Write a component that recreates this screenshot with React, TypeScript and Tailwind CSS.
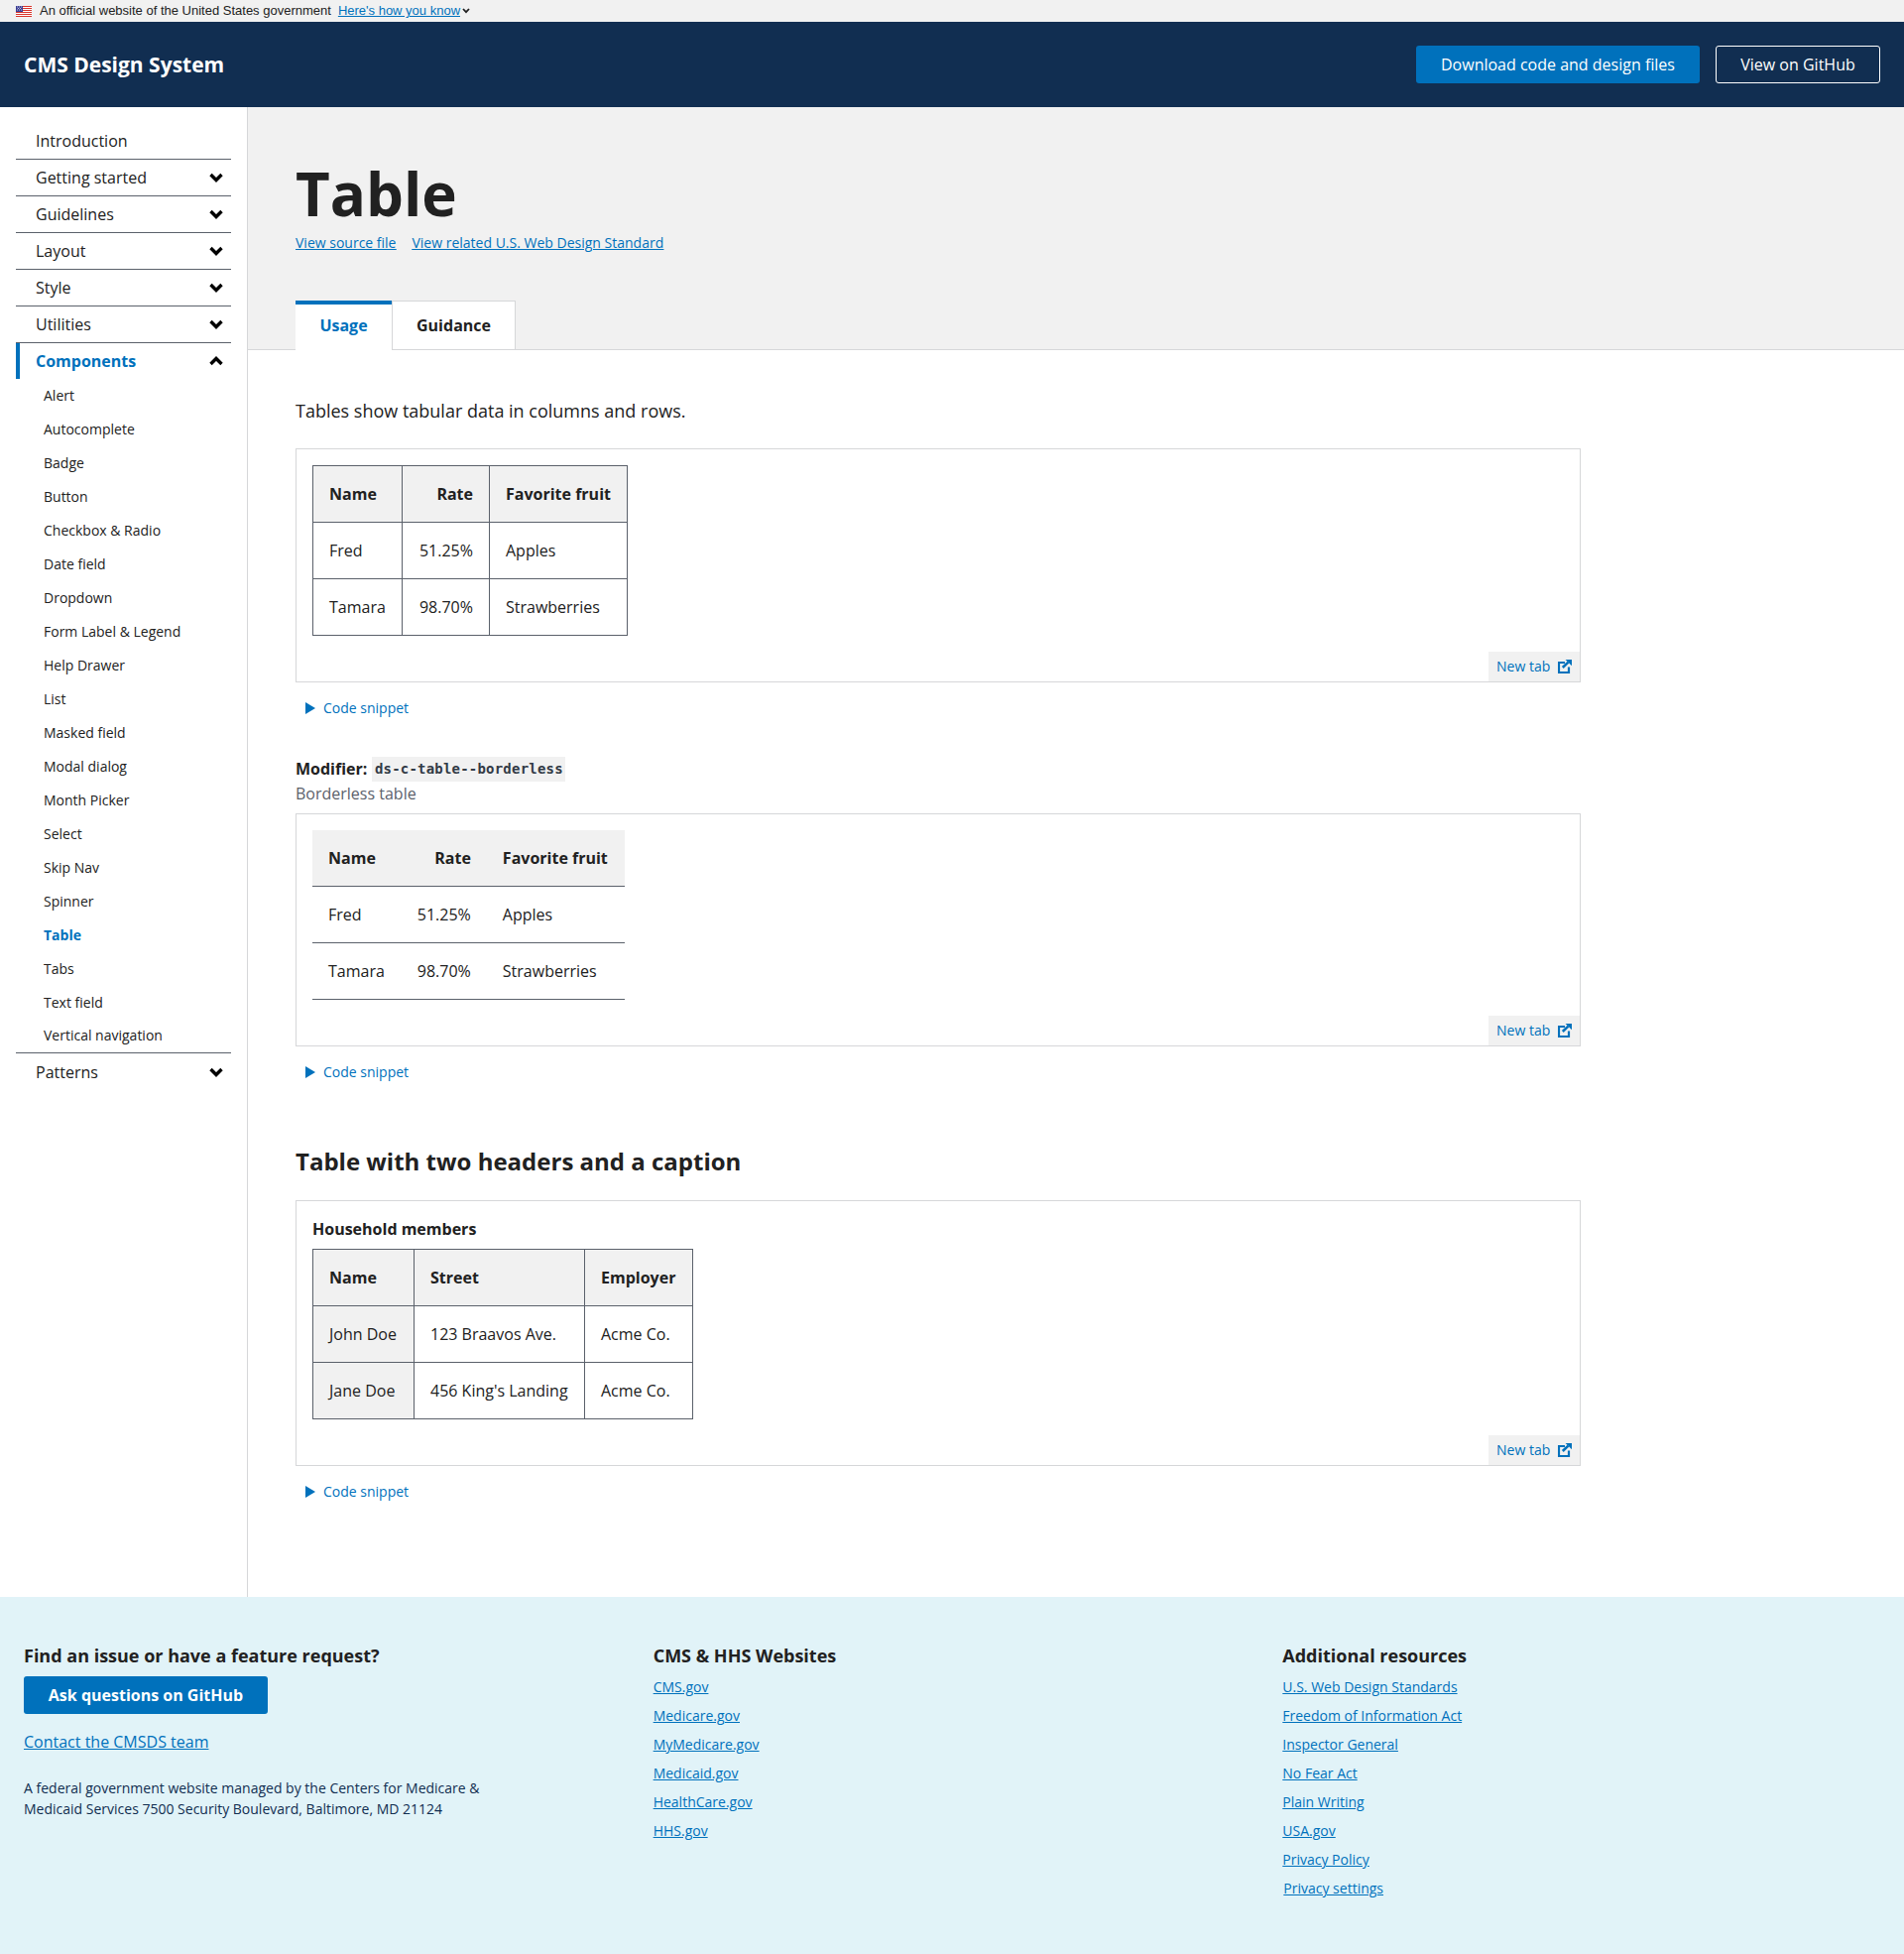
const navTop = ["Getting started", "Guidelines", "Layout", "Style", "Utilities"];

const components = [
  "Alert",
  "Autocomplete",
  "Badge",
  "Button",
  "Checkbox & Radio",
  "Date field",
  "Dropdown",
  "Form Label & Legend",
  "Help Drawer",
  "List",
  "Masked field",
  "Modal dialog",
  "Month Picker",
  "Select",
  "Skip Nav",
  "Spinner",
  "Table",
  "Tabs",
  "Text field",
  "Vertical navigation",
];

const cmsLinks = ["CMS.gov", "Medicare.gov", "MyMedicare.gov", "Medicaid.gov", "HealthCare.gov", "HHS.gov"];

const resourceLinks = [
  "U.S. Web Design Standards",
  "Freedom of Information Act",
  "Inspector General",
  "No Fear Act",
  "Plain Writing",
  "USA.gov",
  "Privacy Policy",
];

const fruitRows = [
  ["Fred", "51.25%", "Apples"],
  ["Tamara", "98.70%", "Strawberries"],
];

const householdRows = [
  ["John Doe", "123 Braavos Ave.", "Acme Co."],
  ["Jane Doe", "456 King's Landing", "Acme Co."],
];

function Chevron({ up = false }: { up?: boolean }) {
  return (
    <svg viewBox="0 0 14 10" className="h-[10px] w-[14px] shrink-0" aria-hidden>
      <polyline
        points={up ? "1.5,8 7,2.5 12.5,8" : "1.5,2 7,7.5 12.5,2"}
        fill="none"
        stroke="#000"
        strokeWidth="3.4"
      />
    </svg>
  );
}

function Flag() {
  return (
    <svg viewBox="0 0 16 11" className="h-[11px] w-4 shrink-0" aria-hidden>
      <rect width="16" height="11" fill="#fff" />
      {[0, 2, 4, 6, 8, 10].map((y) => (
        <rect key={y} y={y} width="16" height="1" fill="#d9342b" />
      ))}
      <rect width="7" height="6" fill="#3c3f94" />
      <path d="M1 1h1M3 1h1M5 1h1M2 2.5h1M4 2.5h1M1 4h1M3 4h1M5 4h1" stroke="#fff" strokeWidth="0.7" />
    </svg>
  );
}

function ExternalIcon() {
  return (
    <svg viewBox="0 0 14 14" className="h-[14px] w-[14px]" aria-hidden>
      <path d="M7 3H1v10h10V7.5" fill="none" stroke="#0071bc" strokeWidth="2.2" />
      <path d="M4.8 8L10.4 2.6" fill="none" stroke="#0071bc" strokeWidth="2.6" />
      <path d="M7.6 0h6.4v6.2z" fill="#0071bc" />
    </svg>
  );
}

function Example({ children }: { children: React.ReactNode }) {
  return (
    <div className="relative w-[1296px] border border-[#d6d7d9] px-4 pt-4 pb-[46px]">
      {children}
      <a className="absolute right-0 bottom-0 flex h-[30px] w-[92px] items-center gap-2 bg-[#f1f1f1] pl-2 text-sm text-[#0071bc]">
        New tab
        <ExternalIcon />
      </a>
    </div>
  );
}

function Snippet() {
  return (
    <div className="mt-4 flex h-5 items-center pl-[10px] text-sm text-[#0071bc]">
      <span className="mr-[8px] h-0 w-0 border-y-[6px] border-l-[10px] border-y-transparent border-l-[#0071bc]" />
      Code snippet
    </div>
  );
}

function FruitTable({ borderless = false }: { borderless?: boolean }) {
  const cell = borderless ? "border-y border-y-[#5b616b] p-4 first:border-t-0" : "border border-[#5b616b] p-4";
  const head = borderless ? "border-b border-b-[#5b616b] bg-[#f1f1f1] p-4" : "border border-[#5b616b] bg-[#f1f1f1] p-4";
  return (
    <table className="border-collapse text-base leading-6 text-[#212121]">
      <colgroup>
        <col className={borderless ? "w-[88px]" : "w-[90px]"} />
        <col className={borderless ? "w-[87px]" : "w-[88px]"} />
        <col className="w-[139px]" />
      </colgroup>
      <thead>
        <tr>
          <th className={`${head} text-left font-bold`}>Name</th>
          <th className={`${head} text-right font-bold`}>Rate</th>
          <th className={`${head} text-left font-bold`}>Favorite fruit</th>
        </tr>
      </thead>
      <tbody>
        {fruitRows.map((row) => (
          <tr key={row[0]}>
            <td className={cell}>{row[0]}</td>
            <td className={`${cell} text-right`}>{row[1]}</td>
            <td className={cell}>{row[2]}</td>
          </tr>
        ))}
      </tbody>
    </table>
  );
}

function HouseholdTable() {
  const cell = "border border-[#5b616b] p-4";
  return (
    <table className="border-collapse text-base leading-6 text-[#212121]">
      <caption className="mb-2 text-left font-bold">Household members</caption>
      <colgroup>
        <col className="w-[102px]" />
        <col className="w-[172px]" />
        <col className="w-[109px]" />
      </colgroup>
      <thead>
        <tr>
          <th className={`${cell} bg-[#f1f1f1] text-left font-bold`}>Name</th>
          <th className={`${cell} bg-[#f1f1f1] text-left font-bold`}>Street</th>
          <th className={`${cell} bg-[#f1f1f1] text-left font-bold`}>Employer</th>
        </tr>
      </thead>
      <tbody>
        {householdRows.map((row) => (
          <tr key={row[0]}>
            <th className={`${cell} bg-[#f1f1f1] text-left font-normal`}>{row[0]}</th>
            <td className={cell}>{row[1]}</td>
            <td className={cell}>{row[2]}</td>
          </tr>
        ))}
      </tbody>
    </table>
  );
}

function Sidebar() {
  return (
    <aside className="w-[250px] shrink-0 border-r border-[#d6d7d9] pt-4 pr-4 pl-4">
      <nav className="text-base text-[#212121]">
        <div className="flex h-[37px] items-center border-b border-[#5b616b] pl-5">Introduction</div>
        {navTop.map((item) => (
          <div key={item} className="flex h-[37px] items-center justify-between border-b border-[#5b616b] pr-2 pl-5">
            {item}
            <Chevron />
          </div>
        ))}
        <div className="flex h-[36px] items-center justify-between border-l-4 border-[#0071bc] pr-2 pl-4 font-bold text-[#0071bc]">
          Components
          <Chevron up />
        </div>
        <ul className="border-b border-[#5b616b] text-sm">
          {components.map((item) => (
            <li
              key={item}
              className={`flex h-[34px] items-center pl-7 last:h-[33px] last:pb-0.5 ${item === "Table" ? "font-bold text-[#0071bc]" : ""}`}
            >
              {item}
            </li>
          ))}
        </ul>
        <div className="flex h-[37px] items-center justify-between pr-2 pl-5">
          Patterns
          <Chevron />
        </div>
      </nav>
    </aside>
  );
}

function Footer() {
  return (
    <footer className="grid h-[360px] grid-cols-[634.67px_634.67px_1fr] bg-[#e1f3f8] pt-[46px] pl-6 text-[#212121]">
      <div>
        <h4 className="text-lg leading-[27px] font-bold">Find an issue or have a feature request?</h4>
        <a className="mt-[7px] flex h-[38px] w-[246px] items-center justify-center rounded-[3px] bg-[#0071bc] font-bold text-white">
          Ask questions on GitHub
        </a>
        <a className="mt-4 block text-base leading-6 text-[#0071bc] underline">Contact the CMSDS team</a>
        <p className="mt-6 w-[480px] text-sm leading-[21px] text-[#112e51]">
          A federal government website managed by the Centers for Medicare &amp; Medicaid Services 7500 Security
          Boulevard, Baltimore, MD 21124
        </p>
      </div>
      <div>
        <h4 className="text-lg leading-[27px] font-bold">CMS &amp; HHS Websites</h4>
        <ul className="mt-[7px] space-y-2 text-sm leading-[21px] text-[#0071bc] underline">
          {cmsLinks.map((item) => (
            <li key={item}>{item}</li>
          ))}
        </ul>
      </div>
      <div>
        <h4 className="text-lg leading-[27px] font-bold">Additional resources</h4>
        <ul className="mt-[7px] space-y-2 text-sm leading-[21px] text-[#0071bc] underline">
          {resourceLinks.map((item) => (
            <li key={item}>{item}</li>
          ))}
          <li className="pl-px">Privacy settings</li>
        </ul>
      </div>
    </footer>
  );
}

export default function App() {
  return (
    <div className="min-h-[1970px] bg-white font-['Open_Sans',sans-serif] text-[#212121]">
      <div className="flex h-[22px] items-center gap-2 bg-[#f1f1f1] pl-4 font-['Liberation_Sans',sans-serif] text-[13px] text-[#212121]">
        <Flag />
        <span>An official website of the United States government</span>
        <span className="-ml-px flex items-center gap-0.5">
          <a className="text-[#0071bc] underline">Here's how you know</a>
          <svg viewBox="0 0 8 6" className="h-[6px] w-2" aria-hidden>
            <polyline points="1,1 4,4.2 7,1" fill="none" stroke="#212121" strokeWidth="1.8" />
          </svg>
        </span>
      </div>

      <header className="flex h-[86px] items-center justify-between bg-[#112e51] pr-6 pl-6 text-white">
        <span className="pt-px text-[21px] font-bold">CMS Design System</span>
        <div className="flex gap-4">
          <a className="flex h-[38px] w-[286px] items-center justify-center rounded-[3px] bg-[#0071bc]">
            Download code and design files
          </a>
          <a className="flex h-[38px] w-[166px] items-center justify-center rounded-[3px] border border-white">
            View on GitHub
          </a>
        </div>
      </header>

      <div className="flex">
        <Sidebar />
        <main className="min-w-0 flex-1">
          <section className="h-[245px] border-b border-[#d6d7d9] bg-[#f1f1f1] pt-[50px] pl-12">
            <h1 className="text-[60px] leading-[75px] font-bold">Table</h1>
            <div className="mt-[2px] flex gap-4 text-sm text-[#0071bc] underline">
              <a>View source file</a>
              <a>View related U.S. Web Design Standard</a>
            </div>
            <div className="mt-[48px] flex h-[50px] font-bold">
              <div className="flex w-[97px] items-center justify-center border-t-4 border-[#0071bc] bg-white pb-[5px] text-[#0071bc]">
                Usage
              </div>
              <div className="flex w-[125px] items-center justify-center border border-[#d6d7d9] bg-white">
                Guidance
              </div>
            </div>
          </section>

          <section className="pt-[46px] pb-24 pl-12">
            <p className="mb-[23px] text-lg leading-[30px]">Tables show tabular data in columns and rows.</p>
            <Example>
              <FruitTable />
            </Example>
            <Snippet />

            <div className="mt-[39px] flex h-6 items-center font-bold">
              Modifier:
              <code className="ml-[5px] flex h-[25px] w-[195px] items-center justify-center bg-[#f1f1f1] font-['DejaVu_Sans_Mono',monospace] text-sm font-bold tracking-[0.2px] text-[#323a45]">
                ds-c-table--borderless
              </code>
            </div>
            <p className="mt-px mb-2 h-6 leading-6 text-[#5b616b]">Borderless table</p>
            <Example>
              <FruitTable borderless />
            </Example>
            <Snippet />

            <h2 className="mt-[64px] mb-[23px] text-2xl leading-8 font-bold">Table with two headers and a caption</h2>
            <Example>
              <HouseholdTable />
            </Example>
            <Snippet />
          </section>
        </main>
      </div>

      <Footer />
    </div>
  );
}
